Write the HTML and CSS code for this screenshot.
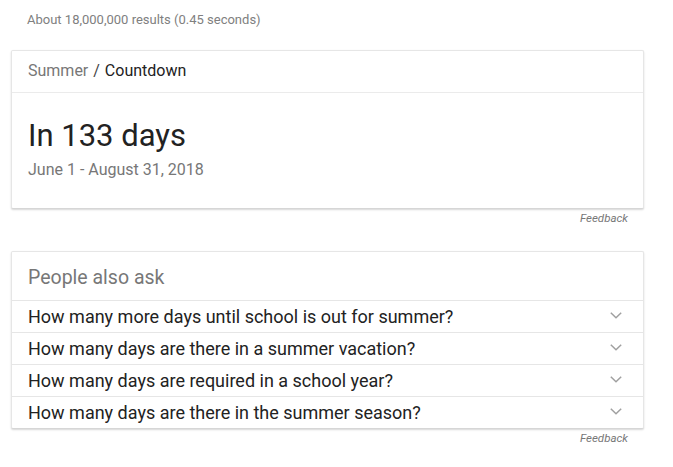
FILE: index.html
```html
<!DOCTYPE html>
<html>
<head>
<meta charset="utf-8">
<link rel="stylesheet" href="styles.css">
</head>
<body>
<div class="page">
  <div class="stats">About 18,000,000 results (0.45 seconds)</div>

  <div class="card countdown">
    <div class="crumbs"><span class="crumb-parent">Summer</span> <span class="sep">/</span> <span class="crumb-current">Countdown</span></div>
    <div class="countdown-body">
      <div class="big">In 133 days</div>
      <div class="range">June 1 - August 31, 2018</div>
    </div>
  </div>
  <div class="feedback">Feedback</div>

  <div class="card paa">
    <div class="paa-title">People also ask</div>
    <div class="paa-row"><span>How many more days until school is out for summer?</span><svg class="chev" width="12" height="7" viewBox="0 0 12 7"><polyline points="0.8,0.8 6,5.8 11.2,0.8" fill="none" stroke="#a0a0a0" stroke-width="1.5"/></svg></div>
    <div class="paa-row"><span>How many days are there in a summer vacation?</span><svg class="chev" width="12" height="7" viewBox="0 0 12 7"><polyline points="0.8,0.8 6,5.8 11.2,0.8" fill="none" stroke="#a0a0a0" stroke-width="1.5"/></svg></div>
    <div class="paa-row"><span>How many days are required in a school year?</span><svg class="chev" width="12" height="7" viewBox="0 0 12 7"><polyline points="0.8,0.8 6,5.8 11.2,0.8" fill="none" stroke="#a0a0a0" stroke-width="1.5"/></svg></div>
    <div class="paa-row"><span>How many days are there in the summer season?</span><svg class="chev" width="12" height="7" viewBox="0 0 12 7"><polyline points="0.8,0.8 6,5.8 11.2,0.8" fill="none" stroke="#a0a0a0" stroke-width="1.5"/></svg></div>
  </div>
  <div class="feedback">Feedback</div>
</div>
</body>
</html>
```

FILE: styles.css
```css
html, body {
  margin: 0;
  padding: 0;
  background: #ffffff;
}

body {
  font-family: Roboto, "Liberation Sans", Arial, sans-serif;
  color: #222222;
}

.page {
  width: 633px;
  padding-left: 11px;
}

.stats {
  padding: 12px 0 0 16px;
  font-size: 13px;
  line-height: 16px;
  color: #808080;
}

.card {
  background: #ffffff;
  border: 1px solid #e6e6e6;
  border-bottom-color: #d6d6d6;
  border-radius: 2px;
  box-shadow: 0 1px 2px rgba(0, 0, 0, 0.16);
}

.countdown {
  margin-top: 22px;
}

.crumbs {
  padding: 10px 16px 11px;
  font-size: 16px;
  line-height: 20px;
  border-bottom: 1px solid #ebebeb;
}

.crumb-parent {
  color: #777777;
}

.sep {
  color: #444444;
  padding: 0 1px;
}

.crumb-current {
  color: #222222;
}

.countdown-body {
  padding: 25px 16px 28px;
}

.big {
  font-size: 31px;
  line-height: 36px;
  color: #222222;
}

.range {
  margin-top: 6px;
  font-size: 16px;
  line-height: 20px;
  color: #777777;
}

.feedback {
  margin-top: 2px;
  padding-right: 16px;
  text-align: right;
  font-size: 11.5px;
  line-height: 14px;
  font-style: italic;
  color: #777777;
}

.paa {
  margin-top: 26px;
}

.paa-title {
  padding: 14px 16px 10px;
  font-size: 19.5px;
  line-height: 24px;
  color: #777777;
}

.paa-row {
  display: flex;
  align-items: center;
  justify-content: space-between;
  height: 31px;
  padding: 0 21px 0 16px;
  border-top: 1px solid #e6e6e6;
  font-size: 18px;
  color: #222222;
}

.chev {
  display: block;
  margin-top: -3px;
}
```
